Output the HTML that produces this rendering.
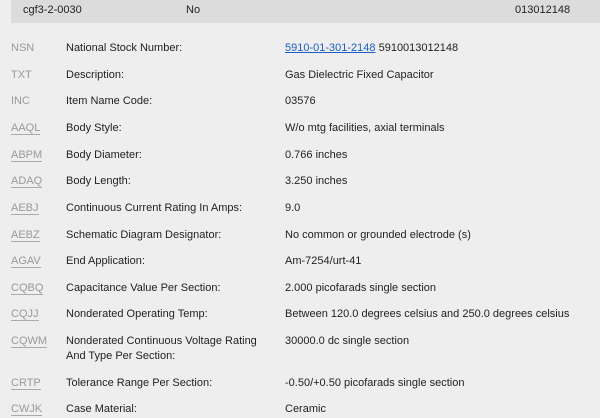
<!DOCTYPE html>
<html><head><style>
body{margin:0;width:600px;height:418px;overflow:hidden;background:#eeeeee;font-family:"Liberation Sans",sans-serif;font-size:11px;color:#222;position:relative}
.hd{position:absolute;left:11px;top:0;width:589px;height:23px;background:#dcdcdc}
.t{position:absolute;white-space:nowrap;line-height:14px}
.c{color:#999;left:11px}
.c u{text-decoration:none;border-bottom:1px solid #aaa}
.l{left:66px}
.v{left:285px}
a{color:#1a5fc8}
</style></head><body>
<div class="hd"></div>
<div class="t" style="left:23px;top:3px">cgf3-2-0030</div>
<div class="t" style="left:186px;top:3px">No</div>
<div class="t" style="left:515px;top:3px">013012148</div>

<div class="t c" style="top:41px">NSN</div><div class="t l" style="top:41px">National Stock Number:</div><div class="t v" style="top:41px"><a href="#">5910-01-301-2148</a> 5910013012148</div>
<div class="t c" style="top:68px">TXT</div><div class="t l" style="top:68px">Description:</div><div class="t v" style="top:68px">Gas Dielectric Fixed Capacitor</div>
<div class="t c" style="top:94px">INC</div><div class="t l" style="top:94px">Item Name Code:</div><div class="t v" style="top:94px">03576</div>
<div class="t c" style="top:121px"><u>AAQL</u></div><div class="t l" style="top:121px">Body Style:</div><div class="t v" style="top:121px">W/o mtg facilities, axial terminals</div>
<div class="t c" style="top:148px"><u>ABPM</u></div><div class="t l" style="top:148px">Body Diameter:</div><div class="t v" style="top:148px">0.766 inches</div>
<div class="t c" style="top:174px"><u>ADAQ</u></div><div class="t l" style="top:174px">Body Length:</div><div class="t v" style="top:174px">3.250 inches</div>
<div class="t c" style="top:201px"><u>AEBJ</u></div><div class="t l" style="top:201px">Continuous Current Rating In Amps:</div><div class="t v" style="top:201px">9.0</div>
<div class="t c" style="top:228px"><u>AEBZ</u></div><div class="t l" style="top:228px">Schematic Diagram Designator:</div><div class="t v" style="top:228px">No common or grounded electrode (s)</div>
<div class="t c" style="top:254px"><u>AGAV</u></div><div class="t l" style="top:254px">End Application:</div><div class="t v" style="top:254px">Am-7254/urt-41</div>
<div class="t c" style="top:281px"><u>CQBQ</u></div><div class="t l" style="top:281px">Capacitance Value Per Section:</div><div class="t v" style="top:281px">2.000 picofarads single section</div>
<div class="t c" style="top:307px"><u>CQJJ</u></div><div class="t l" style="top:307px">Nonderated Operating Temp:</div><div class="t v" style="top:307px">Between 120.0 degrees celsius and 250.0 degrees celsius</div>
<div class="t c" style="top:334px"><u>CQWM</u></div><div class="t l" style="top:334px;line-height:15px">Nonderated Continuous Voltage Rating<br>And Type Per Section:</div><div class="t v" style="top:334px">30000.0 dc single section</div>
<div class="t c" style="top:376px"><u>CRTP</u></div><div class="t l" style="top:376px">Tolerance Range Per Section:</div><div class="t v" style="top:376px">-0.50/+0.50 picofarads single section</div>
<div class="t c" style="top:402px"><u>CWJK</u></div><div class="t l" style="top:402px">Case Material:</div><div class="t v" style="top:402px">Ceramic</div>
</body></html>
